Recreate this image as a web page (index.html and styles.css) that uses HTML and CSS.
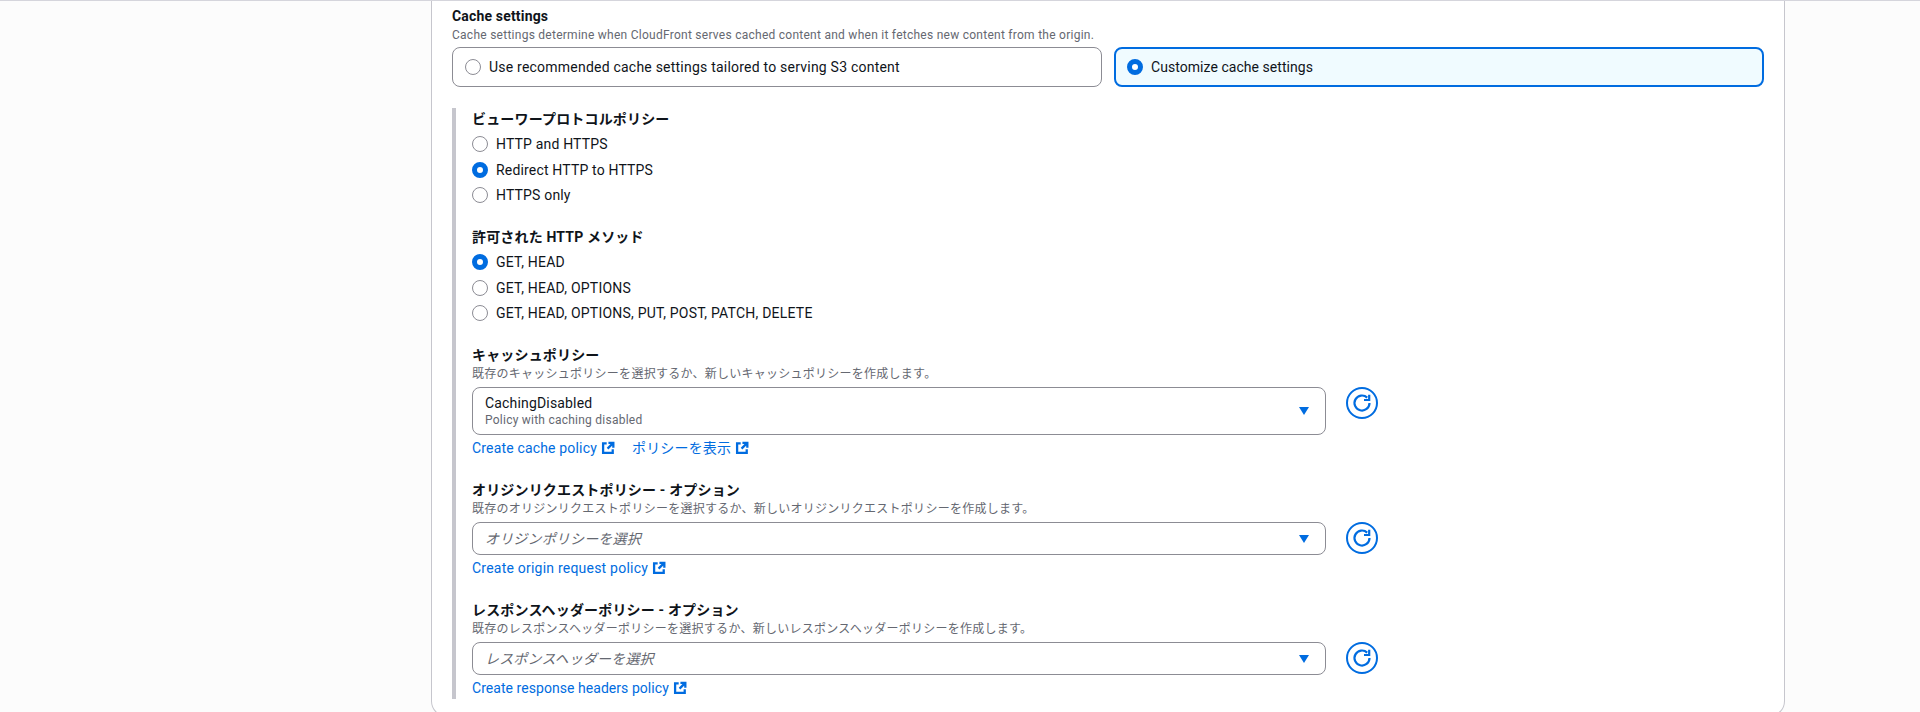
FILE: index.html
```html
<!DOCTYPE html>
<html lang="ja">
<head>
<meta charset="utf-8">
<title>Cache settings</title>
<link rel="stylesheet" href="styles.css">
</head>
<body>
<svg class="defs" width="0" height="0" aria-hidden="true">
  <symbol id="ext" viewBox="0 0 16 16"><path d="M6.5 2.6H2.4v11h11V9.5" fill="none" stroke="currentColor" stroke-width="2.6"/><path d="M8.5 2.2h5.6v5.6M14 2.2 7.5 8.7" fill="none" stroke="currentColor" stroke-width="2.6"/></symbol>
  <symbol id="refresh" viewBox="0 0 32 32"><circle cx="16" cy="16" r="15" fill="none" stroke="currentColor" stroke-width="2"/><path d="M23.5 16a7.5 7.5 0 1 1-2.3-5.4" fill="none" stroke="currentColor" stroke-width="2.2"/><path d="M18 13h5.2V7.8" fill="none" stroke="currentColor" stroke-width="2.2"/></symbol>
</svg>
<main class="card">
  <h2 class="label">Cache settings</h2>
  <p class="desc">Cache settings determine when CloudFront serves cached content and when it fetches new content from the origin.</p>
  <div class="tiles">
    <div class="tile"><span class="radio"></span><span class="wide">Use recommended cache settings tailored to serving S3 content</span></div>
    <div class="tile tile-on"><span class="radio radio-on"></span><span class="tight">Customize cache settings</span></div>
  </div>
  <div class="panel">
    <section class="group">
      <h3 class="label">ビューワープロトコルポリシー</h3>
      <div class="radios">
        <div class="row"><span class="radio"></span><span>HTTP and HTTPS</span></div>
        <div class="row"><span class="radio radio-on"></span><span>Redirect HTTP to HTTPS</span></div>
        <div class="row"><span class="radio"></span><span>HTTPS only</span></div>
      </div>
    </section>
    <section class="group">
      <h3 class="label">許可された HTTP メソッド</h3>
      <div class="radios">
        <div class="row"><span class="radio radio-on"></span><span class="wide">GET, HEAD</span></div>
        <div class="row"><span class="radio"></span><span class="wide">GET, HEAD, OPTIONS</span></div>
        <div class="row"><span class="radio"></span><span class="wide">GET, HEAD, OPTIONS, PUT, POST, PATCH, DELETE</span></div>
      </div>
    </section>
    <section class="group group-field">
      <h3 class="label">キャッシュポリシー</h3>
      <p class="desc">既存のキャッシュポリシーを選択するか、新しいキャッシュポリシーを作成します。</p>
      <div class="control">
        <div class="select select-tall">
          <div class="value"><div>CachingDisabled</div><div class="sub">Policy with caching disabled</div></div>
          <span class="caret"></span>
        </div>
        <svg class="refresh"><use href="#refresh"/></svg>
      </div>
      <div class="links">
        <a class="link">Create cache policy<svg class="ext"><use href="#ext"/></svg></a>
        <a class="link">ポリシーを表示<svg class="ext"><use href="#ext"/></svg></a>
      </div>
    </section>
    <section class="group group-field">
      <h3 class="label">オリジンリクエストポリシー - オプション</h3>
      <p class="desc">既存のオリジンリクエストポリシーを選択するか、新しいオリジンリクエストポリシーを作成します。</p>
      <div class="control">
        <div class="select">
          <div class="placeholder">オリジンポリシーを選択</div>
          <span class="caret"></span>
        </div>
        <svg class="refresh"><use href="#refresh"/></svg>
      </div>
      <div class="links">
        <a class="link"><span class="wide">Create origin request policy</span><svg class="ext"><use href="#ext"/></svg></a>
      </div>
    </section>
    <section class="group group-field">
      <h3 class="label">レスポンスヘッダーポリシー - オプション</h3>
      <p class="desc">既存のレスポンスヘッダーポリシーを選択するか、新しいレスポンスヘッダーポリシーを作成します。</p>
      <div class="control">
        <div class="select">
          <div class="placeholder">レスポンスヘッダーを選択</div>
          <span class="caret"></span>
        </div>
        <svg class="refresh"><use href="#refresh"/></svg>
      </div>
      <div class="links">
        <a class="link"><span class="tight">Create response headers policy</span><svg class="ext"><use href="#ext"/></svg></a>
      </div>
    </section>
  </div>
</main>
</body>
</html>
```
FILE: styles.css
```css
* { box-sizing: border-box; }
html, body { height: 712px; overflow: hidden; }
body {
  margin: 0;
  background: #fcfcfc;
  border-top: 1px solid #d5d5dc;
  color: #0f141a;
  font: 14px/20px Roboto, "Noto Sans CJK JP", sans-serif;
  letter-spacing: .17px;
}
.defs { position: absolute; }
.wide { letter-spacing: .22px; }
.tight { letter-spacing: .05px; }
.card {
  width: 1354px;
  height: 716px;
  margin-left: 431px;
  padding: 5px 20px 0;
  background: #fff;
  border: 1px solid #c6c6cd;
  border-top: 0;
  border-radius: 0 0 16px 16px;
}
.label { margin: 0; font-size: 14px; line-height: 20px; font-weight: 700; }
.desc { margin: 0; font-size: 12px; line-height: 16px; color: #656871; letter-spacing: .26px; }
.card > .desc { margin-top: 1px; }
.tiles { display: grid; grid-template-columns: 650px 650px; gap: 12px; margin-top: 4px; }
.tile {
  display: flex;
  align-items: center;
  gap: 8px;
  height: 40px;
  padding: 0 12px;
  border: 1px solid #8c8c94;
  border-radius: 8px;
}
.tile-on { padding: 0 11px; background: #f0fbff; border: 2px solid #006ce0; }
.radio {
  flex: none;
  width: 16px;
  height: 16px;
  border: 1px solid #8c8c94;
  border-radius: 50%;
  background: #fff;
}
.radio-on { border: 5px solid #006ce0; }
.panel {
  height: 591px;
  margin-top: 21px;
  padding: 1px 0 0 16px;
  border-left: 4px solid #c6c6cd;
}
.group + .group { margin-top: 19px; }
.group-field + .group-field { margin-top: 22px; }
.radios { margin-top: 2.5px; }
.row { display: flex; align-items: center; gap: 8px; height: 25.5px; }
.group-field .desc { margin: 1px 0 5px; }
.control { display: flex; align-items: flex-start; gap: 20px; }
.select {
  display: flex;
  align-items: center;
  justify-content: space-between;
  flex: none;
  width: 854px;
  height: 33px;
  padding: 0 16px 0 12px;
  border: 1px solid #8c8c94;
  border-radius: 8px;
}
.select-tall { height: 48px; }
.value { line-height: 18px; }
.sub { font-size: 12px; line-height: 16px; color: #656871; letter-spacing: .24px; }
.placeholder { color: #656871; font-style: italic; }
.caret {
  width: 0;
  height: 0;
  border-style: solid;
  border-width: 8px 5.5px 0;
  border-color: #006ce0 transparent transparent;
}
.refresh { flex: none; width: 32px; height: 32px; color: #006ce0; }
.links { display: flex; gap: 17px; margin-top: 3px; }
.link { display: flex; align-items: center; gap: 4px; color: #006ce0; }
.ext { width: 14px; height: 14px; }
```
